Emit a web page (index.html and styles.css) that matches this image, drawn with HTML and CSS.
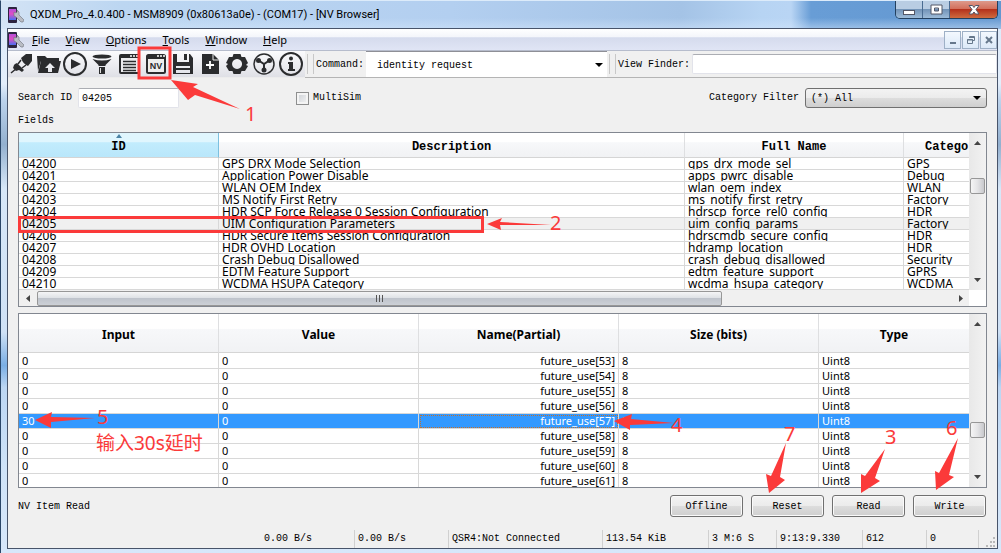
FILE: index.html
```html
<!DOCTYPE html>
<html lang="en">
<head>
<meta charset="utf-8">
<title>QXDM_Pro_4.0.400 - NV Browser</title>
<link rel="stylesheet" href="styles.css">
</head>
<body>
<svg class="defs" width="0" height="0" aria-hidden="true">
  <defs>
    <linearGradient id="phone" x1="0" y1="0" x2="0" y2="1"><stop offset="0" stop-color="#b54fd8"/><stop offset=".45" stop-color="#e04fc4"/><stop offset="1" stop-color="#4a6ff0"/></linearGradient>
    <symbol id="app" viewBox="0 0 16 16"><rect x="0" y="0" width="9" height="16" rx="1" fill="#2c2440"/><rect x="1" y="2" width="7" height="11" fill="url(#phone)"/><path d="M6 5l2 1 1-1 0-2 2 2v3l5 5-1 2-2 0-5-5-2-1z" fill="#b9bcc4" stroke="#6c707b" stroke-width=".6"/></symbol>
  </defs>
</svg>
<div class="window">
  <header class="titlebar">
    <svg class="app-icon" width="16" height="16"><use href="#app"/></svg>
    <h1 class="title">QXDM_Pro_4.0.400 - MSM8909 (0x80613a0e) - (COM17) - [NV Browser]</h1>
    <div class="caption">
      <button class="cap" aria-label="Minimize"><svg width="14" height="12"><rect x="1.500" y="6.500" width="11" height="4" fill="#fff" stroke="#535666"/></svg></button>
      <button class="cap" aria-label="Maximize"><svg width="14" height="12"><path d="M2 1h11v9H2zM5.500 4h4v3h-4z" fill="#fff" fill-rule="evenodd" stroke="#535666"/></svg></button>
      <button class="cap cap-close" aria-label="Close"><svg width="14" height="12"><path d="M2 1.500h3.500L7 3.500l1.500-2H12L9 5.500l3 4.500H8.500L7 8l-1.500 2H2l3-4.500z" fill="#fff" stroke="#535666"/></svg></button>
    </div>
  </header>
  <main class="client">
    <nav class="menubar">
      <svg class="app-icon" width="16" height="16"><use href="#app"/></svg>
      <button class="menu"><u>F</u>ile</button>
      <button class="menu"><u>V</u>iew</button>
      <button class="menu"><u>O</u>ptions</button>
      <button class="menu"><u>T</u>ools</button>
      <button class="menu"><u>W</u>indow</button>
      <button class="menu"><u>H</u>elp</button>
      <div class="mdi">
        <button class="mdi-btn" aria-label="Minimize document"><svg width="10" height="10"><path d="M2 7h6v2H2z" fill="#66788c"/></svg></button>
        <button class="mdi-btn" aria-label="Restore document"><svg width="10" height="10"><path d="M3.500 3V1.500h5v4H7M3 2.500h6M1.500 4.500h5v4h-5zM1 5h6" fill="none" stroke="#66788c"/></svg></button>
        <button class="mdi-btn" aria-label="Close document"><svg width="10" height="10"><path d="M2 2l6 6M8 2L2 8" stroke="#66788c" stroke-width="2"/></svg></button>
      </div>
    </nav>
    <div class="toolbar">
      <div class="tools">
        <button class="tool" aria-label="Connect"><svg viewBox="0 0 26 26"><path d="M13 7l5-4h6v7l-4 5q-5-2-7-8z"/><path d="M3 22l6-5M13 9l-3 4M18 14l-4 3" fill="none" stroke="#2b2c2e" stroke-width="1.500"/><path d="M7 13l2-1 7 7-2 2-3-2-3 1-3-3 1-3z"/></svg></button>
        <button class="tool" aria-label="Open"><svg viewBox="0 0 26 26"><path d="M2 5h8l2 2h12v3H6L3 20z"/><path d="M6 10h20l-3 12H3zM15 12l-5 5h3v4h4v-4h3z" fill-rule="evenodd"/></svg></button>
        <button class="tool" aria-label="Play"><svg viewBox="0 0 26 26"><circle cx="13" cy="13" r="11" fill="none" stroke="#2b2c2e" stroke-width="2"/><path d="M9 8l10 5-10 5z"/></svg></button>
        <button class="tool" aria-label="Filter"><svg viewBox="0 0 26 26"><ellipse cx="13" cy="5.500" rx="9.500" ry="2"/><path d="M3.500 8q9.500 3 19 0l-6 6v1h-7v-1zM10 16h6v7h-6z"/><path d="M11.500 17v5" stroke="#ddd"/></svg></button>
        <button class="tool" aria-label="Messages"><svg viewBox="0 0 26 26"><rect x="4" y="4" width="19" height="18" rx="1" fill="#ececef" stroke="#2b2c2e" stroke-width="2"/><path d="M4 4h19v3H4z"/><path d="M7 10.500h13M7 13.500h13M7 16.500h13M7 19.500h13" stroke="#2b2c2e" stroke-width="1.500"/><path d="M14 5h2m1 0h2m1 0h2" stroke="#fff" stroke-width="1.500"/></svg></button>
        <button class="tool" aria-label="NV Browser"><svg viewBox="0 0 26 26"><rect x="4" y="4" width="18" height="18" rx="1.500" fill="#eee" stroke="#2b2c2e" stroke-width="2"/><path d="M4 4h18v4H4z"/><path d="M14 5h2m1 0h2m1 0h2" stroke="#fff" stroke-width="1.500"/><text x="13" y="18" text-anchor="middle" class="nv">NV</text></svg></button>
        <button class="tool" aria-label="Save"><svg viewBox="0 0 26 26"><path d="M3 3h4v8h12V3h1l3 4v16H3zM14 3h3v6h-3zM6 15h14v7H6z" fill-rule="evenodd"/><path d="M6 17h14v2H6z"/></svg></button>
        <button class="tool" aria-label="New"><svg viewBox="0 0 26 26"><path d="M5 3h11l6 6v14H5z"/><path d="M16 3v6h6" fill="none" stroke="#eee"/><path d="M13 10v8M9 14h8" stroke="#fff" stroke-width="1.800"/></svg></button>
        <button class="tool" aria-label="Settings"><svg viewBox="0 0 26 26"><path d="M9.500 3h7l1 3h3.500l3 6-2 2 2 1-3 5h-3.500l-1 3h-7l-1-3H5l-3-5 2-2-2-1 3-6h3.500zM13 8a5 5 0 1 0 .1 0z" fill-rule="evenodd"/></svg></button>
        <button class="tool" aria-label="Nodes"><svg viewBox="0 0 26 26"><circle cx="13" cy="13" r="10" fill="none" stroke="#2b2c2e" stroke-width="1.500"/><path d="M7 9l6 4 6-4M13 13v7" fill="none" stroke="#2b2c2e" stroke-width="2"/><circle cx="7.500" cy="9.500" r="2.500"/><circle cx="18.500" cy="9.500" r="2.500"/><circle cx="13" cy="19" r="2.500"/></svg></button>
        <button class="tool" aria-label="About"><svg viewBox="0 0 26 26"><circle cx="13" cy="13" r="11" fill="none" stroke="#2b2c2e" stroke-width="2"/><circle cx="13" cy="7.500" r="2"/><path d="M10 11h5v7h2v2h-7v-2h1v-5h-1z"/></svg></button>
      </div>
      <div class="bar bar-command">
        <span class="grip"></span>
        <label for="command">Command:</label>
        <span class="combo combo-flat">
          <select id="command"><option>identity request</option></select>
          <svg class="arrow" width="8" height="4"><path d="M0 0h8L4 4z"/></svg>
        </span>
      </div>
      <div class="bar bar-finder">
        <span class="grip"></span>
        <label for="finder">View Finder:</label>
        <input id="finder" class="field finder" type="text">
      </div>
    </div>

    <section class="page">
      <div class="search">
        <label for="search">Search ID</label>
        <input id="search" class="field search-box" type="text" value="04205">
        <label class="multi"><input type="checkbox" class="check">MultiSim</label>
        <label for="category" class="cat-label">Category Filter</label>
        <span class="combo combo-button">
          <select id="category"><option>(*) All</option></select>
          <svg class="arrow" width="8" height="4"><path d="M0 0h8L4 4z"/></svg>
        </span>
      </div>
      <h2 class="fields">Fields</h2>

      <div class="grid">
        <div class="pane pane-items">
          <table class="items">
            <colgroup><col class="c-id"><col class="c-desc"><col class="c-full"><col class="c-cat"></colgroup>
            <thead><tr><th class="sorted"><svg class="sort" width="6" height="4"><path d="M0 4l3-4 3 4z" fill="#4b83a5"/></svg>ID</th><th>Description</th><th>Full Name</th><th class="cut">Category</th></tr></thead>
            <tbody>
              <tr><td>04200</td><td>GPS DRX Mode Selection</td><td>gps_drx_mode_sel</td><td>GPS</td></tr>
              <tr><td>04201</td><td>Application Power Disable</td><td>apps_pwrc_disable</td><td>Debug</td></tr>
              <tr><td>04202</td><td>WLAN OEM Index</td><td>wlan_oem_index</td><td>WLAN</td></tr>
              <tr><td>04203</td><td>MS Notify First Retry</td><td>ms_notify_first_retry</td><td>Factory</td></tr>
              <tr><td>04204</td><td>HDR SCP Force Release 0 Session Configuration</td><td>hdrscp_force_rel0_config</td><td>HDR</td></tr>
              <tr class="current"><td>04205</td><td>UIM Configuration Parameters</td><td>uim_config_params</td><td>Factory</td></tr>
              <tr><td>04206</td><td>HDR Secure Items Session Configuration</td><td>hdrscmdb_secure_config</td><td>HDR</td></tr>
              <tr><td>04207</td><td>HDR OVHD Location</td><td>hdramp_location</td><td>HDR</td></tr>
              <tr><td>04208</td><td>Crash Debug Disallowed</td><td>crash_debug_disallowed</td><td>Security</td></tr>
              <tr><td>04209</td><td>EDTM Feature Support</td><td>edtm_feature_support</td><td>GPRS</td></tr>
              <tr><td>04210</td><td>WCDMA HSUPA Category</td><td>wcdma_hsupa_category</td><td>WCDMA</td></tr>
            </tbody>
          </table>
        </div>
        <div class="vscroll">
          <svg width="7" height="4"><path d="M0 4l3.500-4L7 4z"/></svg>
          <span class="thumb thumb-top"></span>
          <svg width="7" height="4"><path d="M0 0h7L3.500 4z"/></svg>
        </div>
        <div class="hscroll">
          <svg width="4" height="7"><path d="M4 0v7L0 3.500z"/></svg>
          <span class="hthumb"><i></i><i></i><i></i></span>
          <svg width="4" height="7"><path d="M0 0v7l4-3.500z"/></svg>
        </div>
      </div>

      <div class="grid grid-values">
        <div class="pane pane-values">
          <table class="values">
            <colgroup><col class="v"><col class="v"><col class="v"><col class="v"><col></colgroup>
            <thead><tr><th>Input</th><th>Value</th><th>Name(Partial)</th><th>Size (bits)</th><th>Type</th></tr></thead>
            <tbody>
              <tr><td>0</td><td>0</td><td class="name">future_use[53]</td><td>8</td><td>Uint8</td></tr>
              <tr><td>0</td><td>0</td><td class="name">future_use[54]</td><td>8</td><td>Uint8</td></tr>
              <tr><td>0</td><td>0</td><td class="name">future_use[55]</td><td>8</td><td>Uint8</td></tr>
              <tr><td>0</td><td>0</td><td class="name">future_use[56]</td><td>8</td><td>Uint8</td></tr>
              <tr class="selected"><td>30</td><td>0</td><td class="name focus">future_use[57]</td><td>8</td><td>Uint8</td></tr>
              <tr><td>0</td><td>0</td><td class="name">future_use[58]</td><td>8</td><td>Uint8</td></tr>
              <tr><td>0</td><td>0</td><td class="name">future_use[59]</td><td>8</td><td>Uint8</td></tr>
              <tr><td>0</td><td>0</td><td class="name">future_use[60]</td><td>8</td><td>Uint8</td></tr>
              <tr><td>0</td><td>0</td><td class="name">future_use[61]</td><td>8</td><td>Uint8</td></tr>
            </tbody>
          </table>
        </div>
        <div class="vscroll">
          <svg width="7" height="4"><path d="M0 4l3.500-4L7 4z"/></svg>
          <span class="thumb thumb-low"></span>
          <svg width="7" height="4"><path d="M0 0h7L3.500 4z"/></svg>
        </div>
      </div>

      <div class="actions">
        <span class="message">NV Item Read</span>
        <button class="push">Offline</button>
        <button class="push">Reset</button>
        <button class="push">Read</button>
        <button class="push">Write</button>
      </div>
    </section>

    <footer class="status">
      <span class="s-rate">0.00 B/s</span>
      <span class="s-rate">0.00 B/s</span>
      <span class="s-conn">QSR4:Not Connected</span>
      <span class="s-size">113.54 KiB</span>
      <span class="s-span">3 M:6 S</span>
      <span class="s-time">9:13:9.330</span>
      <span class="s-count">612</span>
      <span class="s-zero">0</span>
      <span class="s-grip"><svg width="10" height="10" fill="#b8b8b8"><path d="M7 0h2v2H7zM4 4h2v2H4zM7 4h2v2H7zM0 8h2v2H0zM4 8h2v2H4zM7 8h2v2H7z"/></svg></span>
    </footer>
  </main>

  <svg class="notes" width="1001" height="553" viewBox="0 0 1001 553">
    <g fill="none" stroke="#fb3a3a" stroke-width="3">
      <path d="M139 48h31v30h-31z"/>
      <path d="M19.500 217.500h463v14h-463z"/>
    </g>
    <path d="M171 80l27 4-5 3 47 22-45-14-7 5z"/>
    <path d="M487 224l15-6-2 4 51 3-51 0 1 5z"/>
    <path d="M35 420l17-8-1 5 44 1-44 4v6z"/>
    <path d="M614 421l18-7-1 5 43 4-44 2v5z"/>
    <path d="M769 493l-3-19 5 2 15-33-6 34 5 3z"/>
    <path d="M861 493l0-19 4 2 20-27-10 29 5 3z"/>
    <path d="M936 490l-1-19 4 2 19-35-9 37 5 2z"/>
    <text x="245" y="121">1</text>
    <text x="550" y="230">2</text>
    <text x="885" y="444">3</text>
    <text x="671" y="432">4</text>
    <text x="97" y="424">5</text>
    <text x="946" y="435">6</text>
    <text x="784" y="441">7</text>
    <text x="96" y="450" class="note-cjk">输入30s延时</text>
  </svg>
</div>
</body>
</html>
```
FILE: styles.css
```css
* { box-sizing: border-box; }
body {
  margin: 0;
  font: 10px/12px "Liberation Mono", monospace;
  color: #000;
}
button, input, select { font: inherit; color: inherit; margin: 0; padding: 0; border: 0; background: none; }
h1, h2 { margin: 0; font: inherit; }
.defs { position: absolute; }

.window {
  position: relative;
  min-height: 100vh;
  display: flex;
  flex-direction: column;
  padding: 0 3px 4px 6px;
  border-left: 1px solid #2a4668;
  border-top: 1px solid #dcebfa;
  background:
    linear-gradient(180deg, rgba(255,255,255,0) 60%, rgba(214,232,252,.5)) 0 0 / 100% 28px no-repeat,
    linear-gradient(90deg, #d3e3f5 0, #bcd6f1 12%, #b3cff0 45%, #a4c3e6 68%, #b7d4f3 76%, #b9d5f4 79%, #689dd6 81%, #6397d0 100%) 0 0 / 100% 28px no-repeat,
    linear-gradient(180deg, #dceafa 0, #e3eefb 15%, #bcd3ec 18%, #93b0cf 26%, #d7e7f8 34%, #cfe1f5 60%, #7aaee4 66%, #bcd6f3 70%, #cfe3f8 85%, #d7e7fa 100%);
}
.titlebar { height: 27px; display: flex; align-items: center; gap: 6px; padding-left: 1px; font: 11px/16px Roboto, sans-serif; }
.app-icon { flex: none; }
.title { flex: 1; white-space: nowrap; }
.caption {
  align-self: flex-start;
  display: flex;
  height: 18px;
  border: 1px solid #23405f;
  border-top: 0;
  border-radius: 0 0 5px 5px;
  overflow: hidden;
}
.cap {
  width: 27px;
  display: grid;
  place-items: center;
  border-right: 1px solid #4a6c92;
  background: linear-gradient(#b9cde3 0 45%, #7394b8 50%, #9dbbd8);
}
.cap-close { width: 47px; border-right: 0; background: linear-gradient(#dd9a8b 0, #d3705c 45%, #b5321c 50%, #cf6b3f); }

.client { flex: 1; display: flex; flex-direction: column; border: 1px solid #48546a; background: #f0f0f0; }
.menubar {
  height: 22px;
  display: flex;
  align-items: center;
  font: 11px/16px "Noto Sans", sans-serif;
  background: linear-gradient(#fff 0, #f4f6fb 36%, #d5dbed 42%, #e0e5f5);
  border-bottom: 1px solid #b6bccc;
}
.menu { padding: 0 8px; }
.mdi { margin-left: auto; display: flex; gap: 1px; }
.mdi-btn { width: 17px; height: 18px; display: grid; place-items: center; border: 1px solid #9eb0c6; background: linear-gradient(#f3f8fe, #dce9f8); }

.toolbar { display: flex; height: 27px; background: #f0f0f0; }
.tools { display: flex; align-items: center; background: linear-gradient(#fbfbfd, #dfe0e6); border-bottom: 1px solid #ececec; }
.tool { width: 27px; height: 26px; }
.tool svg { display: block; width: 26px; height: 26px; fill: #2b2c2e; }
.nv { font: bold 9px "Liberation Sans", sans-serif; }
.bar { display: flex; align-items: center; border-bottom: 1px solid #b4b4b4; white-space: nowrap; }
.grip { width: 7px; height: 20px; margin: 0 2px 0 2px; border: solid #c8c8c8; border-width: 0 1px; }
.bar label { padding-top: 2px; }
.bar-command { flex: 0 1 302px; }
.bar-finder { flex: 1; }
.combo { position: relative; display: block; }
.combo select { appearance: none; width: 100%; height: 100%; display: block; }
.arrow { position: absolute; right: 4px; top: calc(50% - 2px); pointer-events: none; }
.combo-flat { flex: 1; align-self: stretch; margin-left: 2px; background: #fff; border-top: 1px solid #8e8f96; }
.combo-flat select { padding: 2px 0 0 11px; }
.field { background: #fff; border: 1px solid #e2e3ea; border-top-color: #abadb3; border-radius: 2px; }
.finder { flex: 1; height: 20px; margin-left: 2px; min-width: 0; }

.page { flex: 1; padding: 10px 10px 7px; display: flex; flex-direction: column; }
.search { display: flex; align-items: center; height: 20px; white-space: nowrap; }
.search-box { width: 101px; height: 20px; margin-left: 6px; padding: 1px 0 0 3px; }
.multi { display: flex; align-items: center; gap: 4px; margin-left: 117px; }
.check { appearance: none; width: 13px; height: 13px; border: 1px solid #8e8f8f; background: linear-gradient(135deg, #cbcfd5, #f6f6f6) padding-box; box-shadow: inset 0 0 0 2px #f4f4f4; }
.cat-label { margin-left: auto; }
.combo-button { width: 182px; height: 20px; margin-left: 6px; border: 1px solid #707070; border-radius: 3px; background: linear-gradient(#f3f3f3, #ebebeb 50%, #dddddd 50%, #cfcfcf); }
.combo-button select { padding: 1px 0 0 5px; }
.combo-button .arrow { right: 5px; }
.fields { margin: 7px 0 5px; }

.grid { display: grid; grid-template-columns: 1fr 17px; border: 1px solid #828790; background: #fff; }
.grid-values { margin-top: 6px; }
.pane { overflow: hidden; min-width: 0; }
.pane-items { height: 157px; }
.pane-values { height: 173px; }
table { width: 100%; table-layout: fixed; border-collapse: separate; border-spacing: 0; }
th {
  position: relative;
  padding: 0;
  background: linear-gradient(#fff 0 38%, #f7f8fa 40%, #f1f2f4);
  border-right: 1px solid #dedfe1;
  border-bottom: 1px solid #d5d5d5;
  white-space: nowrap;
}
td { padding: 1px 3px 0; border-right: 1px solid #d8d8d8; border-bottom: 1px solid #d8d8d8; white-space: nowrap; overflow: hidden; }
th:last-child, td:last-child { border-right: 0; }
.items th { height: 25px; padding-top: 3px; font: bold 12px/16px "Liberation Mono", monospace; }
.items th.sorted { background: linear-gradient(#e0f6fe 0 38%, #c2ecfd 40%, #b9e7fb); border-right-color: #7cc0df; }
.items th.cut { padding-left: 21px; text-align: left; }
.sort { position: absolute; top: 1px; left: calc(50% - 3px); }
.items td { height: 12px; font: 12px/10px "Noto Sans", sans-serif; }
.c-id { width: 200px; }
.c-full { width: 219px; }
.c-cat { width: 65px; }
.current td { background: #f0f0f0; }
.values th { height: 39px; padding-top: 3px; font: bold 12px/16px "Noto Sans", sans-serif; }
.values td { height: 15px; font: 11px/14px "Noto Sans", sans-serif; }
.values tbody td { padding-top: 0; }
.values tbody tr:first-child td { padding-top: 1px; }
.v { width: 200px; }
.values .name { text-align: right; }
.selected td { background: #3399ff; color: #fff; }
.selected .focus { outline: 1px dotted #c07030; outline-offset: -2px; }

.vscroll { display: flex; flex-direction: column; align-items: center; padding: 8px 0; background: linear-gradient(90deg, #e8e8e8, #f2f2f2); }
.vscroll svg, .hscroll svg { flex: none; fill: #444; }
.thumb { width: 15px; height: 16px; border: 1px solid #979797; border-radius: 2px; background: linear-gradient(90deg, #f5f5f5, #e4e4e6 50%, #c8c9cd); }
.thumb-top { margin: 33px 0 auto; }
.thumb-low { margin: auto 0 37px; }
.hscroll { height: 16px; display: flex; align-items: center; justify-content: space-between; padding: 0 6px 0 7px; background: #f0f0f0; }
.hthumb { flex: 0 1 685px; height: 15px; margin: 0 auto 0 7px; display: flex; align-items: center; justify-content: center; gap: 2px; border: 1px solid #979797; border-radius: 2px; background: linear-gradient(#f4f5f6, #dfe2e6 45%, #bfc4cc 50%, #ccd0d6); }
.hthumb i { width: 1px; height: 7px; background: #555; }

.actions { display: flex; align-items: center; gap: 8px; margin-top: 7px; padding-right: 1px; }
.message { flex: 1; padding-top: 2px; }
.push { width: 73px; height: 22px; padding-top: 1px; border: 1px solid #707070; border-radius: 3px; box-shadow: inset 0 0 0 1px #fafafa; background: linear-gradient(#f3f3f3, #ebebeb 50%, #dddddd 50%, #cfcfcf); }

.status { height: 22px; display: flex; justify-content: flex-end; align-items: stretch; padding: 4px 0 0; white-space: nowrap; }
.status span { padding-left: 3px; border-right: 1px solid #d0d0d0; line-height: 18px; }
.s-rate { width: 94px; }
.s-conn { width: 154px; }
.s-size { width: 106px; }
.s-span { width: 68px; }
.s-time { width: 86px; }
.s-count { width: 64px; }
.s-zero { width: 52px; }
.status .s-grip { width: 18px; padding: 7px 0 0 7px; border: 0; line-height: 10px; }

.notes { position: absolute; left: -1px; top: -1px; pointer-events: none; fill: #fb3a3a; }
.notes text { font: 20px "Noto Sans", "Noto Sans CJK SC", sans-serif; }
.notes .note-cjk { font-size: 19px; }
```
